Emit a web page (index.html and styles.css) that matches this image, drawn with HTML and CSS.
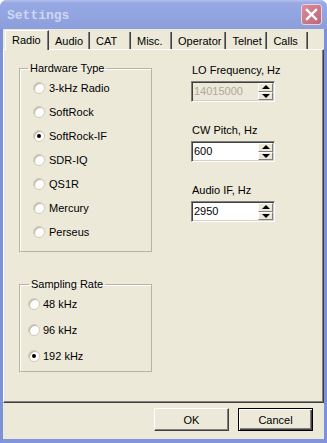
FILE: index.html
```html
<!DOCTYPE html>
<html lang="en">
<head>
    <meta charset="UTF-8">
    <meta name="viewport" content="width=device-width, initial-scale=1.0">
    <title>Settings</title>
    <link rel="stylesheet" href="styles.css">
</head>
<body>
    <div class="window">
        <div class="titlebar">
            <span class="title">Settings</span>
            <span class="close">
                <svg width="13" height="13" viewBox="0 0 13 13">
                    <path d="M2 2 L11 11 M11 2 L2 11" stroke="#fff" stroke-width="2.4" stroke-linecap="square"/>
                </svg>
            </span>
        </div>

        <div class="frame">
            <!-- Tabs -->
            <div class="tabs">
                <div class="tab active">Radio</div>
                <div class="tab">Audio</div>
                <div class="tab">CAT</div>
                <div class="tab">Misc.</div>
                <div class="tab">Operator</div>
                <div class="tab">Telnet</div>
                <div class="tab">Calls</div>
            </div>

            <!-- Radio page -->
            <div class="panel">
                <div class="col-left">
                    <fieldset class="group hw">
                        <legend>Hardware Type</legend>
                        <div class="radio"><span class="circle"></span>3-kHz Radio</div>
                        <div class="radio"><span class="circle"></span>SoftRock</div>
                        <div class="radio"><span class="circle checked"></span>SoftRock-IF</div>
                        <div class="radio"><span class="circle"></span>SDR-IQ</div>
                        <div class="radio"><span class="circle"></span>QS1R</div>
                        <div class="radio"><span class="circle"></span>Mercury</div>
                        <div class="radio"><span class="circle"></span>Perseus</div>
                    </fieldset>

                    <fieldset class="group rate">
                        <legend>Sampling Rate</legend>
                        <div class="radio"><span class="circle"></span>48 kHz</div>
                        <div class="radio"><span class="circle"></span>96 kHz</div>
                        <div class="radio"><span class="circle checked"></span>192 kHz</div>
                    </fieldset>
                </div>

                <div class="col-right">
                    <div class="field">
                        <div class="field-label">LO Frequency, Hz</div>
                        <div class="spin disabled">
                            <span class="value">14015000</span>
                            <span class="spin-btns"><span class="up"></span><span class="down"></span></span>
                        </div>
                    </div>
                    <div class="field">
                        <div class="field-label">CW Pitch, Hz</div>
                        <div class="spin">
                            <span class="value">600</span>
                            <span class="spin-btns"><span class="up"></span><span class="down"></span></span>
                        </div>
                    </div>
                    <div class="field">
                        <div class="field-label">Audio IF, Hz</div>
                        <div class="spin">
                            <span class="value">2950</span>
                            <span class="spin-btns"><span class="up"></span><span class="down"></span></span>
                        </div>
                    </div>
                </div>
            </div>

            <div class="footer">
                <button class="btn">OK</button>
                <button class="btn default">Cancel</button>
            </div>
        </div>
    </div>
</body>
</html>
```

FILE: styles.css
```css
body {
    margin: 0;
    padding: 0;
    background: #fff;
    font-family: "Liberation Sans", Arial, sans-serif;
    font-size: 11px;
    color: #000;
}
.window {
    width: 327px;
    height: 443px;
    display: flex;
    flex-direction: column;
    border-radius: 7px 7px 0 0;
    overflow: hidden;
    background: #8093dc;
}
.titlebar {
    height: 29px;
    flex: none;
    display: flex;
    align-items: center;
    padding: 0 5px 0 7px;
    background: linear-gradient(#b3c0ef 0, #97a9e3 3px, #8c9fdd 100%);
}
.title {
    font-family: "Liberation Mono", "Courier New", monospace;
    font-weight: bold;
    font-size: 13px;
    color: #cdd6f0;
    padding-top: 2px;
}
.close {
    margin-left: auto;
    width: 19px;
    height: 19px;
    border: 1px solid #e8d3da;
    border-radius: 3px;
    background: linear-gradient(135deg, #d88d9b, #bd6677);
    display: flex;
    align-items: center;
    justify-content: center;
}
.frame {
    flex: 1;
    display: flex;
    flex-direction: column;
    background: #ece9d8;
    border-left: 3px solid #7d90da;
    border-right: 3px solid #7d90da;
    border-bottom: 4px solid #8194dd;
}

/* Tabs */
.tabs {
    height: 20px;
    flex: none;
    display: flex;
    align-items: flex-end;
    padding-left: 2px;
}
.tab {
    box-sizing: border-box;
    height: 17px;
    min-width: 41px;
    padding: 2px 4px 0 6px;
    border-right: 1px solid #404040;
    box-shadow: inset -1px 0 #808080;
    line-height: 14px;
}
.tab.active {
    position: relative;
    z-index: 1;
    height: 20px;
    margin-bottom: -1px;
    min-width: 44px;
    padding: 2px 6px 0 6px;
    background: #ece9d8;
    border-left: 1px solid #fff;
    border-top: 1px solid #fff;
    line-height: 14px;
}

/* Page */
.panel {
    flex: 1;
    display: flex;
    border-top: 1px solid #fff;
    border-left: 1px solid #fff;
    border-right: 1px solid #404040;
    border-bottom: 1px solid #404040;
    box-shadow: inset -1px -1px #808080;
}
.col-left {
    padding: 12px 0 0 15px;
    width: 133px;
}
.group {
    margin: 0;
    border: 1px solid #b7b4a3;
    box-shadow: inset 1px 1px #fff;
    width: 133px;
    box-sizing: border-box;
}
.group legend {
    padding: 0 2px;
    line-height: 13px;
}
.group.hw {
    padding: 1px 0 7px 13px;
}
.group.hw legend {
    margin-left: -5px;
}
.group.hw .radio {
    height: 24px;
    gap: 4px;
}
.group.rate {
    margin-top: 26px;
    padding: 0 0 2px 8px;
}
.group.rate legend {
    margin-left: 1px;
}
.group.rate .radio {
    height: 26px;
    gap: 3px;
}
.radio {
    display: flex;
    align-items: center;
}
.circle {
    width: 12px;
    height: 12px;
    border-radius: 50%;
    box-sizing: border-box;
    border: 1px solid #cfccbd;
    background: radial-gradient(circle at 62% 62%, #fff 45%, #e2e0d3 100%);
    box-shadow: inset 1px 1px #b9b6a5;
    display: flex;
    align-items: center;
    justify-content: center;
}
.circle.checked::after {
    content: "";
    width: 4px;
    height: 4px;
    border-radius: 50%;
    background: #000;
}

.col-right {
    margin-left: 39px;
    padding-top: 13px;
    display: flex;
    flex-direction: column;
    gap: 21px;
}
.field-label {
    line-height: 15px;
    margin: 0 0 3px 1px;
}
.spin {
    box-sizing: border-box;
    width: 84px;
    height: 21px;
    display: flex;
    background: #fff;
    border: 1px solid;
    border-color: #808080 #fff #fff #808080;
    box-shadow: inset 1px 1px #404040, inset -1px -1px #d4d0c8;
}
.spin.disabled {
    background: #ece9d8;
    color: #aca899;
}
.spin .value {
    flex: 1;
    padding-left: 2px;
    line-height: 19px;
}
.spin-btns {
    width: 15px;
    margin: 1px 1px 1px 0;
    display: flex;
    flex-direction: column;
}
.spin-btns span {
    flex: 1;
    background: #ece9d8;
    border: 1px solid;
    border-color: #fff #808080 #808080 #fff;
    display: flex;
    align-items: center;
    justify-content: center;
}
.spin-btns .up::after {
    content: "";
    border-left: 4px solid transparent;
    border-right: 4px solid transparent;
    border-bottom: 4px solid #000;
}
.spin-btns .down::after {
    content: "";
    border-left: 4px solid transparent;
    border-right: 4px solid transparent;
    border-top: 4px solid #000;
}

/* Buttons */
.footer {
    height: 36px;
    flex: none;
    box-sizing: border-box;
    display: flex;
    justify-content: flex-end;
    gap: 9px;
    padding: 5px 11px 0 0;
}
.btn {
    box-sizing: border-box;
    width: 75px;
    height: 23px;
    padding: 0;
    font-family: "Liberation Sans", Arial, sans-serif;
    font-size: 11px;
    color: #000;
    background: #ece9d8;
    border: 1px solid;
    border-color: #fff #404040 #404040 #fff;
    box-shadow: inset -1px -1px #808080;
}
.btn.default {
    border: 1px solid #000;
    box-shadow: inset 1px 1px #fff, inset -1px -1px #404040, inset -2px -2px #808080;
}
```
